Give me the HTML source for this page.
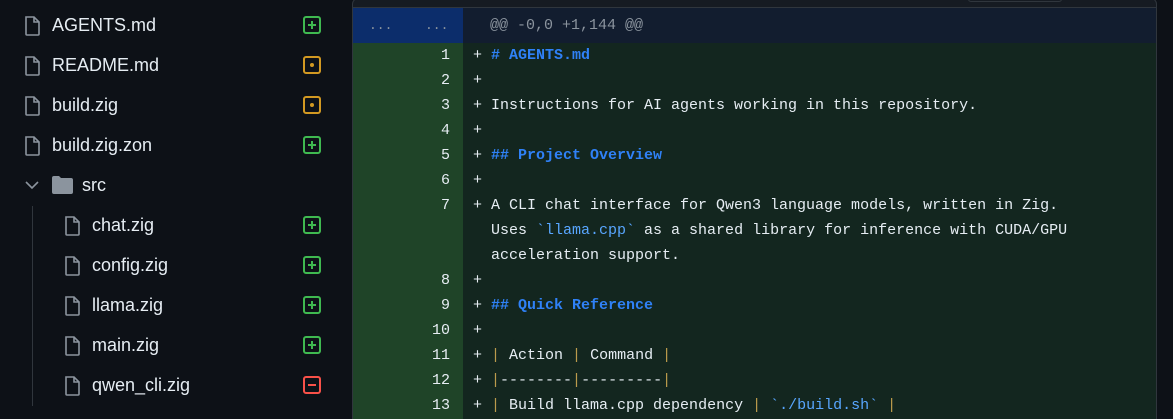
<!DOCTYPE html><html style="height:419px;overflow:hidden"><head><style>
html,body{margin:0;width:1173px;height:419px;overflow:hidden}
body{background:#0d1117;position:relative;font-family:"Liberation Sans",sans-serif}
.r{position:absolute;left:0;height:40px;line-height:40px;color:#e6edf3;font-size:18px}
.r svg{position:absolute}
.ic{top:11px}
.b{position:absolute;left:303px;top:11px;width:14px;height:14px;border:2px solid;border-radius:3px}
.b::before,.b::after{content:"";position:absolute;background:currentColor}
.g{color:#3fb950;border-color:#3fb950}.o{color:#d29922;border-color:#d29922}.red{color:#f85149;border-color:#f85149}
.g::before{left:3px;top:6px;width:8px;height:2px}.g::after{left:6px;top:3px;width:2px;height:8px}
.o::before{left:5px;top:5px;width:4px;height:4px;border-radius:2px}
.red::before{left:3px;top:6px;width:8px;height:2px}
#panel{position:absolute;left:352px;top:-2px;width:803px;height:421px;border:1px solid #30363d;border-bottom:none;border-radius:6px 6px 0 0;overflow:hidden;background:#161b22}
.m{font-family:"Liberation Mono",monospace;font-size:15px}
.h{color:#2f81f7;font-weight:bold}.c{color:#58a6ff}.y{color:#bb9a4c}
</style></head><body>
<div id="side">
<div class="r" style="top:5px"><svg class="ic" style="left:24px" width="17" height="20" viewBox="0 0 17 20"><path d="M2 1h8l5 5v12a1 1 0 0 1-1 1H3a1 1 0 0 1-1-1z M10 1v5h5" fill="none" stroke="#8b949e" stroke-width="1.6"/></svg><span style="position:absolute;left:52px">AGENTS.md</span><div class="b g"></div></div>
<div class="r" style="top:45px"><svg class="ic" style="left:24px" width="17" height="20" viewBox="0 0 17 20"><path d="M2 1h8l5 5v12a1 1 0 0 1-1 1H3a1 1 0 0 1-1-1z M10 1v5h5" fill="none" stroke="#8b949e" stroke-width="1.6"/></svg><span style="position:absolute;left:52px">README.md</span><div class="b o"></div></div>
<div class="r" style="top:85px"><svg class="ic" style="left:24px" width="17" height="20" viewBox="0 0 17 20"><path d="M2 1h8l5 5v12a1 1 0 0 1-1 1H3a1 1 0 0 1-1-1z M10 1v5h5" fill="none" stroke="#8b949e" stroke-width="1.6"/></svg><span style="position:absolute;left:52px">build.zig</span><div class="b o"></div></div>
<div class="r" style="top:125px"><svg class="ic" style="left:24px" width="17" height="20" viewBox="0 0 17 20"><path d="M2 1h8l5 5v12a1 1 0 0 1-1 1H3a1 1 0 0 1-1-1z M10 1v5h5" fill="none" stroke="#8b949e" stroke-width="1.6"/></svg><span style="position:absolute;left:52px">build.zig.zon</span><div class="b g"></div></div>
<div class="r" style="top:165px"><svg style="left:25px;top:15px" width="14" height="10" viewBox="0 0 14 10"><path d="M1 2l6 6 6-6" fill="none" stroke="#8b949e" stroke-width="1.6"/></svg><svg style="left:52px;top:11px" width="21" height="18" viewBox="0 0 21 18"><path d="M0 2a2 2 0 0 1 2-2h5l2 2h10a2 2 0 0 1 2 2v12a2 2 0 0 1-2 2H2a2 2 0 0 1-2-2z" fill="#8b949e"/></svg><span style="position:absolute;left:82px">src</span></div>
<div style="position:absolute;left:32px;top:206px;width:1px;height:200px;background:#30363d"></div>
<div class="r" style="top:205px"><svg class="ic" style="left:64px" width="17" height="20" viewBox="0 0 17 20"><path d="M2 1h8l5 5v12a1 1 0 0 1-1 1H3a1 1 0 0 1-1-1z M10 1v5h5" fill="none" stroke="#8b949e" stroke-width="1.6"/></svg><span style="position:absolute;left:92px">chat.zig</span><div class="b g"></div></div>
<div class="r" style="top:245px"><svg class="ic" style="left:64px" width="17" height="20" viewBox="0 0 17 20"><path d="M2 1h8l5 5v12a1 1 0 0 1-1 1H3a1 1 0 0 1-1-1z M10 1v5h5" fill="none" stroke="#8b949e" stroke-width="1.6"/></svg><span style="position:absolute;left:92px">config.zig</span><div class="b g"></div></div>
<div class="r" style="top:285px"><svg class="ic" style="left:64px" width="17" height="20" viewBox="0 0 17 20"><path d="M2 1h8l5 5v12a1 1 0 0 1-1 1H3a1 1 0 0 1-1-1z M10 1v5h5" fill="none" stroke="#8b949e" stroke-width="1.6"/></svg><span style="position:absolute;left:92px">llama.zig</span><div class="b g"></div></div>
<div class="r" style="top:325px"><svg class="ic" style="left:64px" width="17" height="20" viewBox="0 0 17 20"><path d="M2 1h8l5 5v12a1 1 0 0 1-1 1H3a1 1 0 0 1-1-1z M10 1v5h5" fill="none" stroke="#8b949e" stroke-width="1.6"/></svg><span style="position:absolute;left:92px">main.zig</span><div class="b g"></div></div>
<div class="r" style="top:365px"><svg class="ic" style="left:64px" width="17" height="20" viewBox="0 0 17 20"><path d="M2 1h8l5 5v12a1 1 0 0 1-1 1H3a1 1 0 0 1-1-1z M10 1v5h5" fill="none" stroke="#8b949e" stroke-width="1.6"/></svg><span style="position:absolute;left:92px">qwen_cli.zig</span><div class="b red"></div></div>
</div>
<div id="panel" class="m">
<div style="position:absolute;left:615px;top:0;width:92px;height:2px;border:1px solid #30363d;border-top:none;border-radius:0 0 6px 6px"></div>
<div style="position:absolute;top:8px;left:0;right:0;height:1px;background:#30363d"></div>
<div style="position:absolute;top:9px;left:0;width:110px;height:35px;background:#0c2d6b;color:#8b949e;line-height:35px;font-size:13px"><span style="position:absolute;left:16px">...</span><span style="position:absolute;left:72px">...</span></div>
<div style="position:absolute;top:9px;left:110px;right:0;height:35px;background:#121d2f;color:#8b949e;line-height:35px;padding-left:27px">@@ -0,0 +1,144 @@</div>
<div style="position:absolute;top:44px;left:0;width:110px;height:380px;background:#1f4428"></div>
<div style="position:absolute;top:44px;left:110px;right:0;height:380px;background:#13261f"></div>
<div style="position:absolute;top:44px;left:0;width:803px;height:380px;line-height:25px;color:#e6edf3;overflow:hidden">
<div style="position:absolute;left:0;width:97px;text-align:right;white-space:pre">1
2
3
4
5
6
7


8
9
10
11
12
13</div>
<div style="position:absolute;left:120px;white-space:pre">+ <span class="h"># AGENTS.md</span>
+
+ Instructions for AI agents working in this repository.
+
+ <span class="h">## Project Overview</span>
+
+ A CLI chat interface for Qwen3 language models, written in Zig.
  Uses <span class="c">`llama.cpp`</span> as a shared library for inference with CUDA/GPU
  acceleration support.
+
+ <span class="h">## Quick Reference</span>
+
+ <span class="y">|</span> Action <span class="y">|</span> Command <span class="y">|</span>
+ <span class="y">|</span>--------<span class="y">|</span>---------<span class="y">|</span>
+ <span class="y">|</span> Build llama.cpp dependency <span class="y">|</span> <span class="c">`./build.sh`</span> <span class="y">|</span></div>
</div>
</div>
</body></html>
